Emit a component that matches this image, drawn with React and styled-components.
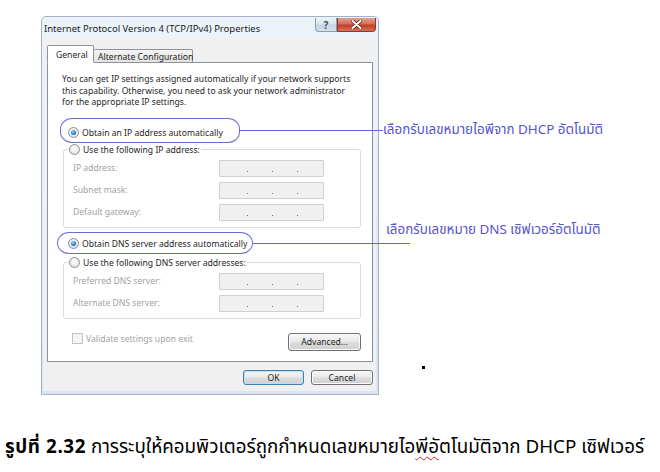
import React from 'react';
import styled, { createGlobalStyle } from 'styled-components';

const GlobalStyle = createGlobalStyle`
  html, body {
    margin: 0;
    padding: 0;
    background: #ffffff;
  }
  body {
    width: 660px;
    height: 472px;
    overflow: hidden;
  }
`;

const uiFont = `"Noto Sans", "DejaVu Sans", sans-serif`;
const thaiFont = `Tahoma, "Noto Sans Thai", "Loma", "Garuda", "Noto Sans", "DejaVu Sans", sans-serif`;

const Page = styled.div`
  position: relative;
  width: 660px;
  height: 472px;
  background: #ffffff;
  display: flex;
  flex-direction: column;
`;

const Figure = styled.div`
  padding: 16px 0 0 41px;
  display: flex;
  align-items: flex-start;
`;

const Window = styled.div`
  width: 338px;
  height: 379px;
  box-sizing: border-box;
  border: 1px solid #a3b2c6;
  border-radius: 5px 5px 0 0;
  background: linear-gradient(180deg, #edf3fa 0%, #dbe5f1 100%);
  display: flex;
  flex-direction: column;
  padding: 0 2px 3px 1px;
`;

const TitleBar = styled.div`
  height: 21px;
  flex: none;
  display: flex;
  align-items: flex-start;
  justify-content: space-between;
`;

const Title = styled.div`
  font-family: ${uiFont};
  font-size: 9.5px;
  color: #1b1b1b;
  padding: 5px 0 0 1px;
  white-space: nowrap;
`;

const CaptionButtons = styled.div`
  display: flex;
  margin-top: 1px;
`;

const CapButton = styled.div`
  height: 14px;
  width: ${(p) => p.$w}px;
  box-sizing: border-box;
  display: flex;
  align-items: center;
  justify-content: center;
  border: 1px solid ${(p) => (p.$close ? '#8d3a2e' : '#8b9bb1')};
  border-top: none;
  border-radius: ${(p) => (p.$close ? '0 0 4px 0' : '0 0 0 4px')};
  background: ${(p) =>
    p.$close
      ? 'linear-gradient(180deg, #e3a08f 0%, #d4705b 45%, #c03e26 55%, #d9735a 100%)'
      : 'linear-gradient(180deg, #eef2f7 0%, #dbe3ed 45%, #c8d3e1 55%, #d7e0eb 100%)'};
  font-family: ${uiFont};
  font-weight: bold;
  font-size: 10px;
  color: #3c4c62;
`;

const Client = styled.div`
  flex: 1;
  background: #f0f0f0;
  display: flex;
  flex-direction: column;
  padding: 8px 3px 0 4px;
`;

const Tabs = styled.div`
  display: flex;
  align-items: flex-end;
  height: 17px;
  flex: none;
  margin-bottom: -1px;
  position: relative;
  z-index: 1;
`;

const Tab = styled.div`
  font-family: ${uiFont};
  font-size: 8.6px;
  color: #1e1e1e;
  box-sizing: border-box;
  width: ${(p) => p.$w}px;
  height: ${(p) => (p.$active ? 18 : 14)}px;
  padding: ${(p) => (p.$active ? '3px 0 0 8px' : '1px 0 0 4px')};
  border: 1px solid #8e939b;
  border-bottom: ${(p) => (p.$active ? '1px solid #ffffff' : '1px solid #8e939b')};
  border-left: ${(p) => (p.$active ? '1px solid #8e939b' : 'none')};
  border-radius: 2px 2px 0 0;
  background: ${(p) =>
    p.$active ? '#ffffff' : 'linear-gradient(180deg, #f4f4f4 0%, #e2e2e2 100%)'};
  white-space: nowrap;
`;

const Panel = styled.div`
  width: 326px;
  height: 300px;
  flex: none;
  box-sizing: border-box;
  background: #ffffff;
  border: 1px solid #8e939b;
  display: flex;
  flex-direction: column;
  padding: 11px 11px 0 14px;
  font-family: ${uiFont};
  font-size: 8.6px;
  color: #1e1e1e;
`;

const Intro = styled.p`
  margin: 0;
  line-height: 11.5px;
  white-space: nowrap;
`;

const RadioRow = styled.div`
  display: flex;
  align-items: center;
  gap: 3px;
  height: 14px;
  margin: ${(p) => p.$margin || '0'};
  padding-left: ${(p) => p.$indent || 0}px;
  white-space: nowrap;
  background: #ffffff;
`;

const Radio = styled.span`
  width: 11px;
  height: 11px;
  box-sizing: border-box;
  border-radius: 50%;
  border: 1px solid #8f8f8f;
  background: radial-gradient(circle at 50% 40%, #ffffff 0%, #e4e4e4 70%, #cfcfcf 100%);
  display: flex;
  align-items: center;
  justify-content: center;
  flex: none;

  &::after {
    content: '';
    display: ${(p) => (p.$checked ? 'block' : 'none')};
    width: 5px;
    height: 5px;
    border-radius: 50%;
    background: radial-gradient(circle at 40% 35%, #9fd8ff 0%, #2a7fc8 55%, #10446f 100%);
  }
`;

const Group = styled.fieldset`
  margin: ${(p) => p.$margin || '0'};
  margin-left: 1px;
  width: 298px;
  box-sizing: border-box;
  border: 1px solid #d5dde3;
  border-radius: 3px;
  padding: 3px 0 6px 9px;
  display: flex;
  flex-direction: column;
  gap: 5px;
`;

const Legend = styled.legend`
  padding: 0 1px 0 0;
  margin-left: -4px;
  color: #1e1e1e;
`;

const FieldRow = styled.div`
  display: flex;
  align-items: center;
  height: 17px;
`;

const FieldLabel = styled.span`
  width: 146px;
  color: #a2a2a2;
  white-space: nowrap;
`;

const IpBox = styled.div`
  width: 105px;
  height: 17px;
  box-sizing: border-box;
  border: 1px solid #cfcfcf;
  border-radius: 1px;
  background: #f0f0f0;
  display: grid;
  grid-template-columns: 28px 25px 25px 1fr;
  align-items: end;
  padding-bottom: 4px;
`;

const Dot = styled.span`
  width: 1px;
  height: 1px;
  background: #6d6d6d;
  justify-self: end;
`;

const BottomRow = styled.div`
  display: flex;
  align-items: center;
  justify-content: space-between;
  margin-top: auto;
  margin-bottom: 10px;
  padding: 0 0 0 10px;
`;

const CheckRow = styled.div`
  display: flex;
  align-items: center;
  gap: 3px;
  color: #a2a2a2;
  margin-top: -7px;
`;

const CheckBox = styled.span`
  width: 11px;
  height: 11px;
  box-sizing: border-box;
  border: 1px solid #c4c4c4;
  background: #f4f4f4;
`;

const Button = styled.div`
  width: ${(p) => p.$w}px;
  height: ${(p) => p.$h}px;
  box-sizing: border-box;
  border: 1px solid ${(p) => (p.$default ? '#3c7fb1' : '#707070')};
  border-radius: 3px;
  background: linear-gradient(180deg, #f6f6f6 0%, #eaeaea 45%, #dcdcdc 55%, #d0d0d0 100%);
  box-shadow: ${(p) => (p.$default ? 'inset 0 0 0 1px #b8e2f7' : 'inset 0 0 0 1px #fbfbfb')};
  display: flex;
  align-items: center;
  justify-content: center;
  font-family: ${uiFont};
  font-size: 8.6px;
  color: #1e1e1e;
`;

const DialogButtons = styled.div`
  display: flex;
  justify-content: flex-end;
  gap: 7px;
  margin-top: 8px;
`;

const Callout = styled.div`
  position: absolute;
  left: ${(p) => p.$x}px;
  top: ${(p) => p.$y}px;
  width: ${(p) => p.$w}px;
  height: ${(p) => p.$h}px;
  box-sizing: border-box;
  border: 1px solid #6b6bd6;
  border-radius: 12px / 11px;
  pointer-events: none;
`;

const Leader = styled.div`
  position: absolute;
  left: ${(p) => p.$x}px;
  top: ${(p) => p.$y}px;
  width: ${(p) => p.$w}px;
  height: 1px;
  background: #6464d2;
`;

const Note = styled.div`
  position: absolute;
  left: ${(p) => p.$x}px;
  top: ${(p) => p.$y}px;
  font-family: ${thaiFont};
  font-size: 13.4px;
  line-height: 16px;
  color: #5454ce;
  white-space: nowrap;
  background: #ffffff;
`;

const Speck = styled.div`
  position: absolute;
  left: 422px;
  top: 366px;
  width: 3px;
  height: 3px;
  background: #000000;
`;

const Caption = styled.div`
  margin-top: 40px;
  padding-left: 5px;
  font-family: ${thaiFont};
  font-size: 18.8px;
  line-height: 24px;
  color: #000000;
  white-space: nowrap;
`;

const CaptionLead = styled.b`
  font-weight: bold;
  letter-spacing: 0.6px;
`;

const Misspelled = styled.span`
  text-decoration: underline wavy #e02020;
  text-decoration-thickness: 1px;
  text-underline-offset: 3px;
`;

const ipFields = ['IP address:', 'Subnet mask:', 'Default gateway:'];
const dnsFields = ['Preferred DNS server:', 'Alternate DNS server:'];

const IpInput = () => (
  <IpBox>
    <Dot />
    <Dot />
    <Dot />
  </IpBox>
);

const App = () => (
  <Page>
    <GlobalStyle />
    <Figure>
      <Window>
        <TitleBar>
          <Title>Internet Protocol Version 4 (TCP/IPv4) Properties</Title>
          <CaptionButtons>
            <CapButton $w={22}>?</CapButton>
            <CapButton $w={39} $close>
              <svg width="11" height="9" viewBox="0 0 11 9">
                <path d="M1.5 1 L9.5 8 M9.5 1 L1.5 8" stroke="#5a1a10" strokeWidth="3.4" strokeLinecap="round" />
                <path d="M1.5 1 L9.5 8 M9.5 1 L1.5 8" stroke="#ffffff" strokeWidth="2" strokeLinecap="round" />
              </svg>
            </CapButton>
          </CaptionButtons>
        </TitleBar>
        <Client>
          <Tabs>
            <Tab $active $w={47}>General</Tab>
            <Tab $w={99}>Alternate Configuration</Tab>
          </Tabs>
          <Panel>
            <Intro>
              You can get IP settings assigned automatically if your network supports
              <br />
              this capability. Otherwise, you need to ask your network administrator
              <br />
              for the appropriate IP settings.
            </Intro>
            <RadioRow $margin="17px 0 0 0" $indent={6}>
              <Radio $checked />
              Obtain an IP address automatically
            </RadioRow>
            <Group $margin="3px 0 0 0">
              <Legend>
                <RadioRow>
                  <Radio />
                  Use the following IP address:
                </RadioRow>
              </Legend>
              {ipFields.map((f) => (
                <FieldRow key={f}>
                  <FieldLabel>{f}</FieldLabel>
                  <IpInput />
                </FieldRow>
              ))}
            </Group>
            <RadioRow $margin="9px 0 0 0" $indent={6}>
              <Radio $checked />
              Obtain DNS server address automatically
            </RadioRow>
            <Group $margin="5px 0 0 0">
              <Legend>
                <RadioRow>
                  <Radio />
                  Use the following DNS server addresses:
                </RadioRow>
              </Legend>
              {dnsFields.map((f) => (
                <FieldRow key={f}>
                  <FieldLabel>{f}</FieldLabel>
                  <IpInput />
                </FieldRow>
              ))}
            </Group>
            <BottomRow>
              <CheckRow>
                <CheckBox />
                Validate settings upon exit
              </CheckRow>
              <Button $w={73} $h={18}>Advanced...</Button>
            </BottomRow>
          </Panel>
          <DialogButtons>
            <Button $w={61} $h={15} $default>OK</Button>
            <Button $w={62} $h={15}>Cancel</Button>
          </DialogButtons>
        </Client>
      </Window>
    </Figure>

    <Callout $x={60} $y={118} $w={180} $h={25} />
    <Leader $x={240} $y={130} $w={143} />
    <Note $x={383} $y={122}>เลือกรับเลขหมายไอพีจาก DHCP อัตโนมัติ</Note>

    <Callout $x={57} $y={232} $w={196} $h={22} />
    <Leader $x={253} $y={243} $w={157} />
    <Note $x={386} $y={222}>เลือกรับเลขหมาย DNS เซิฟเวอร์อัตโนมัติ</Note>

    <Speck />

    <Caption>
      <CaptionLead>รูปที่ 2.32</CaptionLead> การระบุให้คอมพิวเตอร์ถูกกำหนดเลขหมายไอ<Misspelled>พีอั</Misspelled>ตโนมัติจาก DHCP เซิฟเวอร์
    </Caption>
  </Page>
);

export default App;
